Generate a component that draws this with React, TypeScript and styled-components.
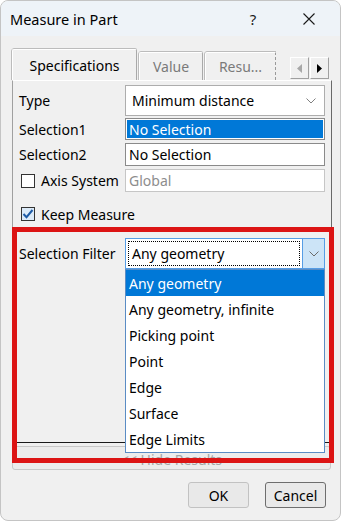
import React from "react";
import styled, { createGlobalStyle } from "styled-components";

const FONT = `"Noto Sans", "Open Sans", "Liberation Sans", sans-serif`;

const GlobalStyle = createGlobalStyle`
  html, body {
    margin: 0;
    padding: 0;
    background: #ffffff;
  }
  body {
    font-family: ${FONT};
    color: #000;
  }
`;

const Window = styled.div`
  position: relative;
  width: 341px;
  height: 521px;
  box-sizing: border-box;
  border: 1px solid #c4c4c4;
  border-radius: 8px;
  background: #f0f0f0;
  overflow: hidden;
  display: flex;
  flex-direction: column;
  font-size: 14px;
`;

const TitleBar = styled.div`
  height: 35px;
  display: flex;
  align-items: center;
  padding-left: 9px;
  padding-right: 8px;
  background: #eef3f8;
  font-size: 14.5px;
`;

const Title = styled.div`
  flex: 1;
`;

const TitleButton = styled.div<{ $gap?: number }>`
  width: 46px;
  height: 35px;
  margin-right: ${({ $gap }) => $gap ?? 0}px;
  display: flex;
  align-items: center;
  justify-content: center;
  font-size: 15px;
  color: #1a1a1a;
`;

const Body = styled.div`
  padding: 0 10px 0 11px;
  display: flex;
  flex-direction: column;
`;

const TabStrip = styled.div`
  height: 44px;
  display: flex;
  align-items: flex-end;
  gap: 2px;
`;

type TabProps = { $active?: boolean; $width: number; $torn?: boolean };

const Tab = styled.div<TabProps>`
  width: ${({ $width }) => $width}px;
  height: ${({ $active }) => ($active ? 31 : 28)}px;
  box-sizing: border-box;
  display: flex;
  align-items: center;
  justify-content: center;
  border: 1px solid #a9a9a9;
  border-bottom: none;
  border-top-color: #ffffff;
  border-left-color: #ffffff;
  box-shadow: -1px 0 0 #bcbcbc, 0 -1px 0 #bcbcbc;
  border-radius: 2px 2px 0 0;
  background: #f0f0f0;
  color: ${({ $active }) => ($active ? "#000" : "#7a7a7a")};
  font-size: 14px;
  padding-top: ${({ $active }) => ($active ? 1 : 0)}px;
  ${({ $torn }) =>
    $torn ? "border-right: 1px dashed #9a9a9a; border-radius: 2px 0 0 0;" : ""}
`;

const ScrollButtons = styled.div`
  margin-left: auto;
  margin-right: 1px;
  margin-bottom: 1px;
  display: flex;
  gap: 1px;
`;

const ScrollButton = styled.div`
  width: 19px;
  height: 22px;
  box-sizing: border-box;
  border: 1px solid;
  border-color: #ffffff #a0a0a0 #a0a0a0 #ffffff;
  background: #f0f0f0;
  display: flex;
  align-items: center;
  justify-content: center;
`;

const Panel = styled.div`
  width: 320px;
  height: 363px;
  box-sizing: border-box;
  border: 1px solid;
  border-color: #ffffff #696969 #1a1a1a #a0a0a0;
  padding: 3px 4px 0 6px;
  display: flex;
  flex-direction: column;
`;

type RowProps = { $h: number; $mt: number };

const Row = styled.div<RowProps>`
  height: ${({ $h }) => $h}px;
  margin-top: ${({ $mt }) => $mt}px;
  display: grid;
  grid-template-columns: 106px 200px;
  align-items: center;
`;

const Label = styled.div`
  display: flex;
  align-items: center;
  gap: 6px;
  white-space: nowrap;
`;

const Combo = styled.div`
  height: 100%;
  box-sizing: border-box;
  background: #fff;
  border: 1px solid #adadad;
  display: flex;
  align-items: center;
  padding-left: 6px;
  padding-right: 8px;
`;

const ComboText = styled.div`
  flex: 1;
`;

type FieldProps = { $variant: "selected" | "normal" | "disabled" };

const Field = styled.div<FieldProps>`
  height: 100%;
  box-sizing: border-box;
  display: flex;
  align-items: center;
  padding-left: 3px;
  border: 1px solid
    ${({ $variant }) => ($variant === "disabled" ? "#c6c6c6" : "#8a8a8a")};
  background: ${({ $variant }) => ($variant === "selected" ? "#0078d7" : "#fff")};
  color: ${({ $variant }) =>
    $variant === "selected" ? "#fff" : $variant === "disabled" ? "#8d8d8d" : "#000"};
  ${({ $variant }) =>
    $variant === "selected" ? "box-shadow: inset 0 0 0 1px #fff;" : ""}
`;

const CheckBox = styled.div<{ $checked?: boolean }>`
  width: 14px;
  height: 14px;
  box-sizing: border-box;
  margin-left: 2px;
  border: 1px solid #333;
  background: ${({ $checked }) => ($checked ? "#dbeaf8" : "#fff")};
  display: flex;
  align-items: center;
  justify-content: center;
`;

const FilterCombo = styled.div`
  position: relative;
  height: 100%;
  box-sizing: border-box;
  background: #fff;
  border: 1px solid #569de5;
  display: flex;
`;

const FocusText = styled.div`
  flex: 1;
  margin: 2px;
  border: 1px dotted #000;
  display: flex;
  align-items: center;
  padding-left: 3px;
`;

const DropButton = styled.div`
  width: 21px;
  background: #cce4f7;
  border-left: 1px solid #569de5;
  display: flex;
  align-items: center;
  justify-content: center;
`;

const DropList = styled.div`
  position: absolute;
  left: -1px;
  top: 30px;
  width: 200px;
  box-sizing: border-box;
  background: #fff;
  border: 1px solid #5a8cc4;
  z-index: 3;
`;

const DropItem = styled.div<{ $selected?: boolean }>`
  height: 26px;
  display: flex;
  align-items: center;
  padding-left: 3px;
  background: ${({ $selected }) => ($selected ? "#0078d7" : "#fff")};
  color: ${({ $selected }) => ($selected ? "#fff" : "#000")};
`;

const HideButton = styled.div`
  margin-top: 3px;
  width: 319px;
  height: 24px;
  box-sizing: border-box;
  border: 1px solid #c8c8c8;
  border-radius: 3px;
  background: #ececec;
  color: #a6a6a6;
  display: flex;
  align-items: center;
  justify-content: center;
  padding-top: 2px;
`;

const Footer = styled.div`
  margin-top: 12px;
  display: flex;
  justify-content: flex-end;
  gap: 16px;
  padding-right: 4px;
`;

const Button = styled.div<{ $default?: boolean }>`
  width: 61px;
  height: 26px;
  box-sizing: border-box;
  border: 1px solid ${({ $default }) => ($default ? "#6e6e6e" : "#c2c2c2")};
  border-radius: 3px;
  background: #e9e9e9;
  display: flex;
  align-items: center;
  justify-content: center;
`;

const Annotation = styled.div`
  position: absolute;
  left: 11px;
  top: 226px;
  width: 322px;
  height: 236px;
  box-sizing: border-box;
  border: 5px solid #dc1414;
  z-index: 5;
  pointer-events: none;
`;

const Chevron = ({ color = "#6b6b6b" }: { color?: string }) => (
  <svg width="10" height="6" viewBox="0 0 10 6">
    <path d="M0.5 0.5 L5 5 L9.5 0.5" fill="none" stroke={color} strokeWidth="1" />
  </svg>
);

const Check = () => (
  <svg width="12" height="12" viewBox="0 0 12 12">
    <path d="M1.5 6 L4.5 9.2 L10.5 2" fill="none" stroke="#1d5ba6" strokeWidth="2" />
  </svg>
);

const filterItems = [
  "Any geometry",
  "Any geometry, infinite",
  "Picking point",
  "Point",
  "Edge",
  "Surface",
  "Edge Limits",
];

export default function App() {
  return (
    <>
      <GlobalStyle />
      <Window>
        <TitleBar>
          <Title>Measure in Part</Title>
          <TitleButton $gap={10}>?</TitleButton>
          <TitleButton>
            <svg width="12" height="12" viewBox="0 0 12 12">
              <path d="M0.5 0.5 L11.5 11.5 M11.5 0.5 L0.5 11.5" stroke="#1a1a1a" strokeWidth="1.1" />
            </svg>
          </TitleButton>
        </TitleBar>
        <Body>
          <TabStrip>
            <Tab $active $width={125}>Specifications</Tab>
            <Tab $width={64}>Value</Tab>
            <Tab $width={71} $torn>Resu...</Tab>
            <ScrollButtons>
              <ScrollButton>
                <svg width="5" height="9" viewBox="0 0 5 9">
                  <path d="M5 0 L0 4.5 L5 9 Z" fill="#a8a8a8" />
                </svg>
              </ScrollButton>
              <ScrollButton>
                <svg width="5" height="9" viewBox="0 0 5 9">
                  <path d="M0 0 L5 4.5 L0 9 Z" fill="#000" />
                </svg>
              </ScrollButton>
            </ScrollButtons>
          </TabStrip>
          <Panel>
            <Row $h={31} $mt={1}>
              <Label>Type</Label>
              <Combo>
                <ComboText>Minimum distance</ComboText>
                <Chevron color="#808080" />
              </Combo>
            </Row>
            <Row $h={22} $mt={2}>
              <Label>Selection1</Label>
              <Field $variant="selected">No Selection</Field>
            </Row>
            <Row $h={23} $mt={3}>
              <Label>Selection2</Label>
              <Field $variant="normal">No Selection</Field>
            </Row>
            <Row $h={23} $mt={3}>
              <Label>
                <CheckBox />
                Axis System
              </Label>
              <Field $variant="disabled">Global</Field>
            </Row>
            <Row $h={22} $mt={11}>
              <Label>
                <CheckBox $checked>
                  <Check />
                </CheckBox>
                Keep Measure
              </Label>
            </Row>
            <Row $h={31} $mt={13}>
              <Label>Selection Filter</Label>
              <FilterCombo>
                <FocusText>Any geometry</FocusText>
                <DropButton>
                  <Chevron />
                </DropButton>
                <DropList>
                  {filterItems.map((item, i) => (
                    <DropItem key={item} $selected={i === 0}>
                      {item}
                    </DropItem>
                  ))}
                </DropList>
              </FilterCombo>
            </Row>
          </Panel>
          <HideButton>&lt;&lt; Hide Results</HideButton>
          <Footer>
            <Button>OK</Button>
            <Button $default>Cancel</Button>
          </Footer>
        </Body>
        <Annotation />
      </Window>
    </>
  );
}
